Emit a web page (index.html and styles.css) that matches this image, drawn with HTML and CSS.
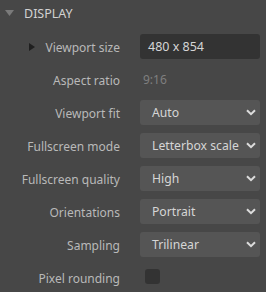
FILE: index.html
```html
<!DOCTYPE html>
<html>
<head>
<meta charset="utf-8">
<link rel="stylesheet" href="styles.css">
</head>
<body>
<div class="panel">
  <div class="section-head">
    <svg class="tri-down" width="9" height="6" viewBox="0 0 9 6"><path d="M0 0H9L4.5 6Z" fill="#7a7a7a"/></svg>
    <span class="section-title">DISPLAY</span>
  </div>
  <div class="rows">
    <div class="label">
      <svg class="tri-right" width="6" height="8" viewBox="0 0 6 8"><path d="M0 0V8L6 4Z" fill="#1f1f1f"/></svg>
      <span>Viewport size</span>
    </div>
    <div class="ctl"><div class="input">480 x 854</div></div>

    <div class="label">Aspect ratio</div>
    <div class="ctl"><span class="dim">9:16</span></div>

    <div class="label">Viewport fit</div>
    <div class="ctl"><div class="select"><span>Auto</span><svg class="chev" width="10" height="7" viewBox="0 0 10 7"><path d="M1 1.2L5 5.2L9 1.2" fill="none" stroke="#dcdcdc" stroke-width="2"/></svg></div></div>

    <div class="label">Fullscreen mode</div>
    <div class="ctl"><div class="select"><span>Letterbox scale</span><svg class="chev" width="10" height="7" viewBox="0 0 10 7"><path d="M1 1.2L5 5.2L9 1.2" fill="none" stroke="#dcdcdc" stroke-width="2"/></svg></div></div>

    <div class="label">Fullscreen quality</div>
    <div class="ctl"><div class="select"><span>High</span><svg class="chev" width="10" height="7" viewBox="0 0 10 7"><path d="M1 1.2L5 5.2L9 1.2" fill="none" stroke="#dcdcdc" stroke-width="2"/></svg></div></div>

    <div class="label">Orientations</div>
    <div class="ctl"><div class="select"><span>Portrait</span><svg class="chev" width="10" height="7" viewBox="0 0 10 7"><path d="M1 1.2L5 5.2L9 1.2" fill="none" stroke="#dcdcdc" stroke-width="2"/></svg></div></div>

    <div class="label">Sampling</div>
    <div class="ctl"><div class="select"><span>Trilinear</span><svg class="chev" width="10" height="7" viewBox="0 0 10 7"><path d="M1 1.2L5 5.2L9 1.2" fill="none" stroke="#dcdcdc" stroke-width="2"/></svg></div></div>

    <div class="label">Pixel rounding</div>
    <div class="ctl"><div class="check"></div></div>
  </div>
</div>
</body>
</html>
```
FILE: styles.css
```css
html, body {
  margin: 0;
  padding: 0;
  background: #474747;
}
.panel {
  width: 266px;
  height: 292px;
  font-family: "Noto Sans", "Open Sans", sans-serif;
  font-size: 12px;
  color: #b9b9b9;
  overflow: hidden;
}
.section-head {
  height: 30px;
  display: flex;
  align-items: center;
  padding-left: 5px;
  box-sizing: border-box;
  padding-bottom: 4px;
}
.tri-down {
  margin-right: 10px;
}
.section-title {
  color: #d2d2d2;
  font-size: 12.5px;
}
.rows {
  display: grid;
  grid-template-columns: 120px 120px;
  grid-auto-rows: 33px;
  column-gap: 20px;
}
.label {
  display: flex;
  align-items: center;
  justify-content: flex-end;
  white-space: nowrap;
  color: #b9b9b9;
  padding-top: 1px;
}
.tri-right {
  margin-right: 10px;
}
.ctl {
  display: flex;
  align-items: center;
}
.input {
  width: 100%;
  height: 25px;
  box-sizing: border-box;
  background: #333333;
  border-radius: 3px;
  color: #d6d6d6;
  display: flex;
  align-items: center;
  padding-left: 8px;
  font-size: 12.5px;
}
.dim {
  color: #7f7f7f;
  padding-left: 3px;
}
.select {
  width: 100%;
  height: 25px;
  box-sizing: border-box;
  background: #555555;
  border-radius: 3px;
  color: #d6d6d6;
  display: flex;
  align-items: center;
  justify-content: space-between;
  padding-left: 12px;
  padding-right: 4px;
  white-space: nowrap;
  font-size: 12.2px;
}
.check {
  width: 15px;
  height: 15px;
  margin-left: 5px;
  margin-top: -3px;
  background: #333333;
  border-radius: 3px;
}
```
